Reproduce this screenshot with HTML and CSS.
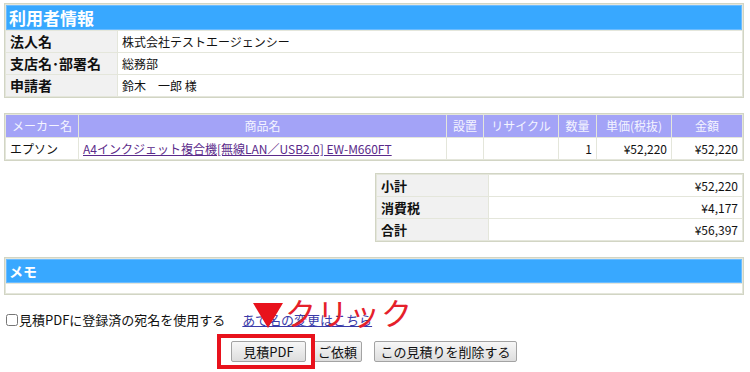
FILE: index.html
```html
<!DOCTYPE html>
<html lang="ja">
<head>
  <meta charset="UTF-8" />
  <meta name="viewport" content="width=device-width, initial-scale=1.0"/>
  <title>見積り詳細</title>
  <link rel="stylesheet" href="styles.css">
</head>
<body>
<div class="page">

  <table class="info">
    <colgroup><col class="w-label"><col></colgroup>
    <tr><th colspan="2" class="sec">利用者情報</th></tr>
    <tr><th>法人名</th><td>株式会社テストエージェンシー</td></tr>
    <tr><th>支店名･部署名</th><td>総務部</td></tr>
    <tr><th>申請者</th><td>鈴木　一郎 様</td></tr>
  </table>

  <table class="items">
    <colgroup>
      <col class="w-maker"><col><col class="w-set"><col class="w-recycle"><col class="w-qty"><col class="w-price"><col class="w-sum">
    </colgroup>
    <tr>
      <th>メーカー名</th><th>商品名</th><th>設置</th><th>リサイクル</th><th>数量</th><th>単価(税抜)</th><th>金額</th>
    </tr>
    <tr>
      <td>エプソン</td>
      <td><a href="#">A4インクジェット複合機[無線LAN／USB2.0] EW-M660FT</a></td>
      <td></td><td></td>
      <td class="num">1</td><td class="num">¥52,220</td><td class="num">¥52,220</td>
    </tr>
  </table>

  <table class="totals">
    <colgroup><col class="w-label"><col></colgroup>
    <tr><th>小計</th><td>¥52,220</td></tr>
    <tr><th>消費税</th><td>¥4,177</td></tr>
    <tr><th>合計</th><td>¥56,397</td></tr>
  </table>

  <table class="memo">
    <tr><th class="sec">メモ</th></tr>
    <tr><td></td></tr>
  </table>

  <div class="actions">
    <div class="opt">
      <label><input type="checkbox">見積PDFに登録済の宛名を使用する</label>
      <a href="#" class="addr-link">あて名の変更はこちら</a>
    </div>
    <div class="buttons">
      <span class="marked"><button class="btn btn-pdf">見積PDF</button></span>
      <button class="btn btn-req">ご依頼</button>
      <button class="btn btn-del">この見積りを削除する</button>
    </div>

    <!-- 注釈 -->
    <div class="note-arrow"></div>
    <div class="note-text">クリック</div>
  </div>

</div>
</body>
</html>
```

FILE: styles.css
```css
body {
  margin: 0;
  font-family: "Noto Sans CJK JP", "Liberation Sans", sans-serif;
  font-size: 13px;
  color: #111;
  background: #fff;
}
.page {
  width: 740px;
  margin: 3px 0 0 4px;
}

table {
  width: 100%;
  table-layout: fixed;
  border: 1px solid #d2d5c4;
  border-spacing: 1px;
  background: #e4e6db;
}
th, td {
  padding: 0 4px;
  height: 21px;
  line-height: 21px;
  white-space: nowrap;
  overflow: hidden;
  font-weight: normal;
  text-align: left;
}
td {
  background: #fff;
  font-size: 12px;
}
th {
  background: #f1f1f1;
  font-size: 14px;
  font-weight: bold;
}
th.sec {
  background: #38a8ff;
  color: #fff;
  font-size: 17px;
  height: 25px;
  line-height: 25px;
  padding-left: 3px;
  box-shadow: inset 0 0 0 1px #6cbcff;
}

.w-label { width: 111px; }

/* 商品 */
.items { margin-top: 15px; }
.items th {
  background: #a3a3f7;
  color: #f4f4ff;
  font-size: 12px;
  font-weight: normal;
  text-align: center;
  height: 22px;
  line-height: 22px;
}
.items .w-maker { width: 72px; }
.items .w-set { width: 36px; }
.items .w-recycle { width: 74px; }
.items .w-qty { width: 37px; }
.items .w-price { width: 74px; }
.items .w-sum { width: 70px; }
.items td.num { text-align: right; }
.items a { color: #5a2a8a; }

/* 合計 */
.totals {
  width: 369px;
  margin: 12px 0 0 371px;
}
.totals th { font-size: 13px; }
.totals td { text-align: right; }

/* メモ */
.memo { margin-top: 15px; }
.memo th.sec {
  font-size: 14px;
  height: 24px;
  line-height: 24px;
}
.memo td { height: 9px; line-height: 9px; }

/* 操作 */
.actions {
  position: relative;
  padding: 15px 0 12px;
}
.opt {
  height: 20px;
  line-height: 20px;
  display: flex;
  align-items: center;
}
.opt label {
  display: flex;
  align-items: center;
}
.opt input {
  width: 12px;
  height: 12px;
  margin: 0 1px 0 2px;
}
.addr-link {
  margin-left: 17px;
  color: #3a3aa8;
}
.buttons {
  display: flex;
  align-items: flex-start;
  justify-content: center;
  margin-top: 11px;
}
.btn {
  height: 21px;
  padding: 0 4px;
  font-family: inherit;
  font-size: 13px;
  line-height: 19px;
  color: #111;
  border: 1px solid #a3a3a3;
  border-radius: 2px;
  background: linear-gradient(#f7f7f7, #dddddd);
}
.btn-pdf { width: 75px; }
.btn-req { width: 49px; margin-left: 7px; }
.btn-del { width: 143px; margin-left: 12px; }

.marked {
  position: relative;
  display: flex;
}
.marked::after {
  content: "";
  position: absolute;
  left: -14px;
  right: -9px;
  top: -7px;
  bottom: -7px;
  border: 4px solid #e8121c;
}
.note-arrow {
  position: absolute;
  left: 249px;
  top: 8px;
  width: 0;
  height: 0;
  border-left: 15px solid transparent;
  border-right: 15px solid transparent;
  border-top: 25px solid #e8121c;
}
.note-text {
  position: absolute;
  left: 281px;
  top: -1px;
  font-size: 31px;
  line-height: 36px;
  color: #e5202a;
  letter-spacing: 1px;
}
```
